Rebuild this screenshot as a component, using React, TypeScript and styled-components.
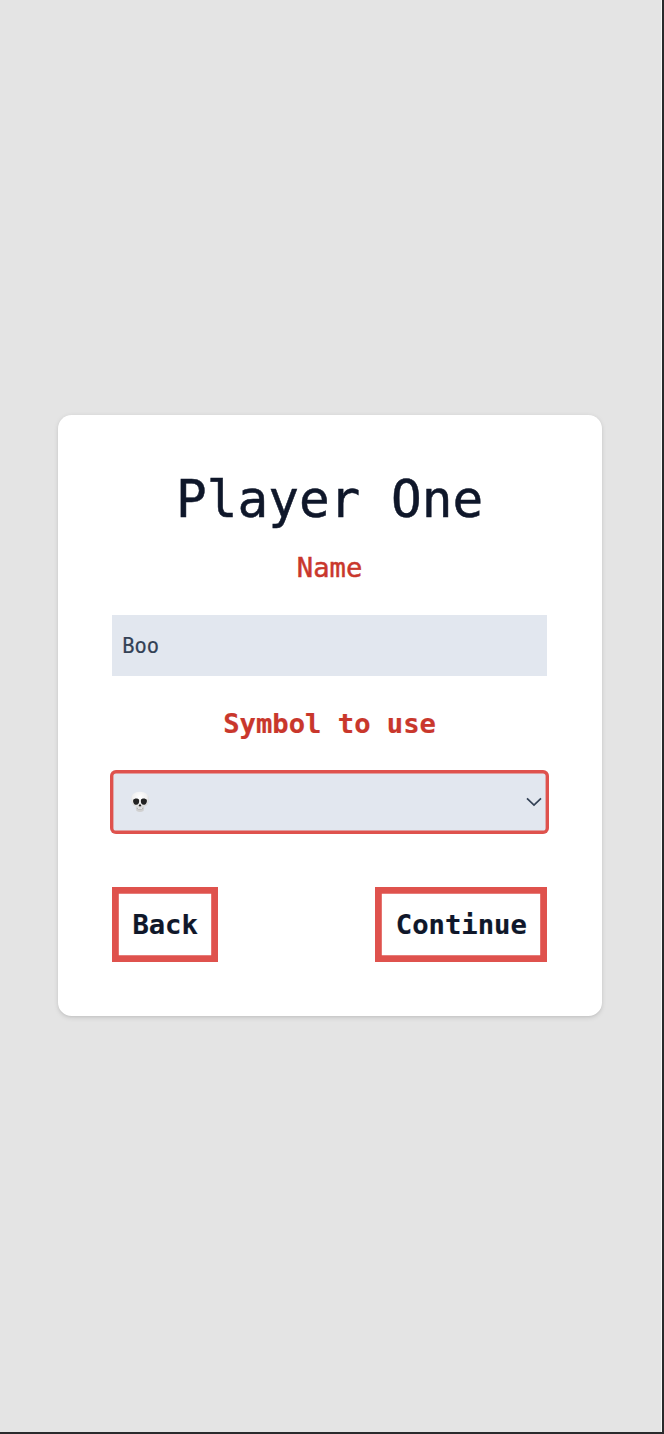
import React from "react";
import styled, { createGlobalStyle } from "styled-components";

const GlobalStyle = createGlobalStyle`
  * { box-sizing: border-box; }
  body {
    margin: 0;
    background: #2a2a2c;
    font-family: "DejaVu Sans Mono", monospace;
    overflow: hidden;
  }
`;

const Frame = styled.div`
  width: 664px;
  height: 1434px;
  padding: 0 2px 2px 0;
  background: #2a2a2c;
`;

const Screen = styled.main`
  height: 1432px;
  padding: 414.6px 0 0 57.6px;
  background: #e4e4e4;
  border-right: 1px solid #f7f7f7;
`;

const Card = styled.form`
  display: flex;
  flex-direction: column;
  width: 544px;
  height: 601.6px;
  padding: 54.4px;
  background: #fff;
  border-radius: 13.6px;
  box-shadow: 0 1.7px 5.1px rgba(0, 0, 0, 0.1), 0 1.7px 3.4px -1.7px rgba(0, 0, 0, 0.1);
`;

const Title = styled.h1`
  margin: 0;
  height: 61px;
  line-height: 61px;
  font-size: 51px;
  font-weight: 400;
  text-align: center;
  color: #0f172a;
  -webkit-text-stroke: 0.5px #0f172a;
`;

const Label = styled.label<{ $bold?: boolean }>`
  height: 41px;
  margin: ${(p) => (p.$bold ? "27px 0 28px" : "17px 0 27px")};
  line-height: 41px;
  font-size: 27.2px;
  font-weight: ${(p) => (p.$bold ? 700 : 400)};
  text-align: center;
  color: #c9372c;
  -webkit-text-stroke: ${(p) => (p.$bold ? "0.2px" : "0.5px")} #c9372c;
`;

const NameInput = styled.input`
  height: 61px;
  width: 100%;
  flex: none;
  padding: 1px 10.2px 0;
  border: 0;
  outline: 0;
  border-radius: 0;
  background: #e2e7ef;
  color: #334155;
  font: 20.4px "DejaVu Sans Mono", monospace;
  -webkit-text-stroke: 0.2px #334155;
`;

const SymbolSelect = styled.div`
  display: flex;
  flex: none;
  align-items: center;
  justify-content: space-between;
  height: 64px;
  margin: -2px -1.7px 0;
  padding: 0 6.7px 0 20px;
  border-radius: 6px;
  background: #e2e7ef;
  box-shadow: inset 0 0 0 3.4px #df524d;
`;

const Actions = styled.div`
  display: flex;
  justify-content: space-between;
  margin-top: 53px;
`;

const Button = styled.button`
  height: 74.8px;
  padding: 0 20.4px;
  border: 0;
  background: #fff;
  box-shadow: inset 0 0 0 6.8px #df524d;
  color: #0f172a;
  font: 700 27.2px "DejaVu Sans Mono", monospace;
  -webkit-text-stroke: 0.2px #0f172a;
`;

const Skull = () => (
  <svg width="20" height="22" viewBox="0 0 20 22" aria-label="Skull">
    <defs>
      <radialGradient id="bone" cx="48%" cy="30%" r="72%">
        <stop offset="0" stopColor="#fff" />
        <stop offset=".55" stopColor="#f0f0f0" />
        <stop offset="1" stopColor="#c5c5c5" />
      </radialGradient>
    </defs>
    <path d="M5.7 16.4 14.3 16.4 13.5 20 Q10 22 6.500 20Z" fill="#d0d0d0" />
    <path d="M10 .7C4.700.7 1 3.700 1 8c0 2.300.7 3.800 1.400 5.100.5 1.500 2.100 2.100 3.400 2.400l.9 2.500q3.300 1.100 6.600 0l.9-2.500c1.300-.3 2.900-.9 3.400-2.400C18.300 11.800 19 10.300 19 8 19 3.700 15.300.7 10 .7Z" fill="url(#bone)" />
    <path d="M3.200 9C4.200 7 8.600 7 9.100 9c.4 2.700-.7 4.800-2.900 4.800-2.100 0-3.500-2.300-3-4.800ZM16.800 9C15.800 7 11.400 7 10.900 9c-.4 2.700.7 4.800 2.900 4.800 2.100 0 3.500-2.300 3-4.800Z" fill="#222" />
    <path d="m10 12.800-1.500 2.300 1 .4.500-.6.500.6 1-.4Z" fill="#222" />
    <path d="M7 16.700q3 1.500 6 0l-.5 1.400q-2.500 1-5 0Z" fill="#999" />
    <path d="M7.400 17q2.600 1 5.200 0M8.500 16.800v1.500M10 17v1.600m1.500-1.800v1.500" stroke="#eee" strokeWidth=".7" fill="none" />
  </svg>
);

const Chevron = () => (
  <svg width="16" height="10" viewBox="0 0 16 10" fill="none">
    <path d="m1 1.300 7 6.800 7-6.800" stroke="#334155" strokeWidth="1.700" />
  </svg>
);

export default function App() {
  return (
    <Frame>
      <GlobalStyle />
      <Screen>
        <Card onSubmit={(e) => e.preventDefault()}>
          <Title>Player One</Title>
          <Label htmlFor="name">Name</Label>
          <NameInput id="name" defaultValue="Boo" />
          <Label $bold>Symbol to use</Label>
          <SymbolSelect role="combobox" aria-label="Symbol to use" tabIndex={0}>
            <Skull />
            <Chevron />
          </SymbolSelect>
          <Actions>
            <Button type="button">Back</Button>
            <Button type="submit">Continue</Button>
          </Actions>
        </Card>
      </Screen>
    </Frame>
  );
}
